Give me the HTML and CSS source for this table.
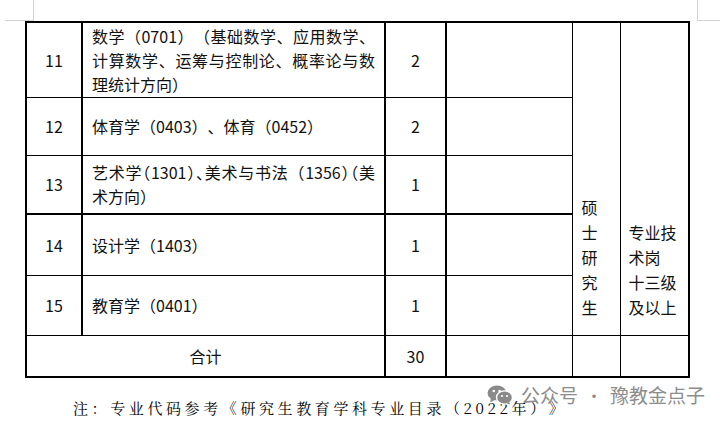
FILE: index.html
```html
<!DOCTYPE html>
<html lang="zh-CN">
<head>
<meta charset="utf-8">
<title>招聘岗位表</title>
<link rel="stylesheet" href="styles.css">
</head>
<body>
<div class="page">
  <span class="mark mark-left"></span>
  <span class="mark mark-right"></span>
  <table class="quota">
    <colgroup>
      <col class="w-no"><col class="w-major"><col class="w-num"><col class="w-blank"><col class="w-edu"><col class="w-post">
    </colgroup>
    <tbody>
      <tr class="r11">
        <td class="no">11</td>
        <td class="major">
          <span class="ln just">数学（0701）（基础数学、应用数学、</span>
          <span class="ln just">计算数学、运筹与控制论、概率论与数</span>
          <span class="ln">理统计方向）</span>
        </td>
        <td class="num">2</td>
        <td class="blank"></td>
        <td class="edu" rowspan="5">硕<br>士<br>研<br>究<br>生</td>
        <td class="post" rowspan="5">专业技<br>术岗<br>十三级<br>及以上</td>
      </tr>
      <tr class="r12">
        <td class="no">12</td>
        <td class="major">体育学（0403）、体育（0452）</td>
        <td class="num">2</td>
        <td class="blank"></td>
      </tr>
      <tr class="r13">
        <td class="no">13</td>
        <td class="major">
          <span class="ln just">艺术学<span class="half">（</span>1301<span class="half">）、</span>美术与书法（1356<span class="half">）（</span>美</span>
          <span class="ln">术方向）</span>
        </td>
        <td class="num">1</td>
        <td class="blank"></td>
      </tr>
      <tr class="r14">
        <td class="no">14</td>
        <td class="major">设计学（1403）</td>
        <td class="num">1</td>
        <td class="blank"></td>
      </tr>
      <tr class="r15">
        <td class="no">15</td>
        <td class="major">教育学（0401）</td>
        <td class="num">1</td>
        <td class="blank"></td>
      </tr>
      <tr class="total">
        <td class="sum-label" colspan="2">合计</td>
        <td class="num">30</td>
        <td class="blank"></td>
        <td class="blank"></td>
        <td class="blank"></td>
      </tr>
    </tbody>
  </table>
  <p class="note">注：专业代码参考《研究生教育学科专业目录（2022年）》</p>
  <div class="watermark">
    <svg class="wx" width="26" height="20" viewBox="0 0 26 20" aria-hidden="true">
      <ellipse cx="10" cy="8" rx="9.5" ry="7.6" fill="#8a8a8a"/>
      <path d="M4 13.5 L3 17.5 L8 14.8 Z" fill="#8a8a8a"/>
      <ellipse cx="17.5" cy="12.5" rx="8" ry="6.6" fill="#8a8a8a" stroke="#fff" stroke-width="1.4"/>
      <path d="M22 17 L23.5 19.6 L19.5 18.2 Z" fill="#8a8a8a"/>
      <circle cx="6.8" cy="6" r="1.3" fill="#fff"/>
      <circle cx="12.6" cy="6" r="1.3" fill="#fff"/>
      <circle cx="15" cy="11" r="1.1" fill="#fff"/>
      <circle cx="20" cy="11" r="1.1" fill="#fff"/>
    </svg>
    <span class="wm-text">公众号</span>
    <span class="wm-dot">·</span>
    <span class="wm-text">豫教金点子</span>
  </div>
</div>
</body>
</html>
```

FILE: styles.css
```css
html, body {
  margin: 0;
  padding: 0;
  background: #fff;
}

body {
  font-family: "Noto Sans CJK SC", "Noto Sans", sans-serif;
  color: #111;
  text-spacing-trim: space-all;
}

.page {
  position: relative;
  width: 720px;
  height: 428px;
  box-sizing: border-box;
  padding: 21px 0 0 25px;
  overflow: hidden;
}

/* crop marks of the document page */
.mark {
  position: absolute;
  top: 0;
  height: 20px;
  border-bottom: 1px solid #d2d2d2;
}
.mark-left {
  left: 5px;
  width: 28px;
  border-right: 1px solid #d2d2d2;
}
.mark-right {
  left: 697px;
  width: 23px;
  border-left: 1px solid #d2d2d2;
}

.quota {
  border-collapse: collapse;
  table-layout: fixed;
  width: 665px;
  border: 2px solid #000;
  font-size: 16px;
  line-height: 24.5px;
  font-weight: 400;
}

.w-no { width: 56px; }
.w-major { width: 303px; }
.w-num { width: 61px; }
.w-blank { width: 126px; }
.w-edu { width: 48px; }
.w-post { width: 69px; }

.quota td {
  border: 1px solid #000;
  padding: 0 8px;
  vertical-align: middle;
}

.quota td.no,
.quota td.major,
.quota td.num,
.quota td.sum-label {
  border-right-width: 2px;
}

.r11 { height: 75px; }
.r12 { height: 58px; }
.r13 { height: 59px; }
.r14 { height: 61px; }
.r15 { height: 60px; }
.total { height: 42px; }

.r13 td {
  border-bottom-width: 2px;
}

.no,
.num,
.sum-label {
  text-align: center;
}

.quota td.major {
  padding: 0 9px 0 9px;
  white-space: nowrap;
  line-height: 24px;
}

.ln {
  display: block;
}

.ln.just {
  text-align: justify;
  text-align-last: justify;
  text-justify: inter-character;
}

.half {
  font-feature-settings: "halt";
}

.quota td.edu,
.quota td.post {
  vertical-align: bottom;
  padding: 0 0 15px 9px;
  line-height: 25px;
  white-space: nowrap;
}
.quota td.post {
  padding-left: 8px;
}

.note {
  margin: 20px 0 0 48px;
  font-size: 15px;
  line-height: 20px;
  letter-spacing: 3.6px;
  color: #000;
  font-family: "Noto Serif CJK SC", "Noto Sans CJK SC", serif;
}

.watermark {
  position: absolute;
  left: 487px;
  top: 384px;
  display: flex;
  align-items: center;
  color: #8c8c8c;
  font-size: 19px;
  line-height: 22px;
}

.wx {
  display: block;
  flex: none;
  margin-right: 8px;
}

.wm-text {
  white-space: nowrap;
}

.wm-dot {
  width: 32px;
  text-align: center;
  font-size: 16px;
}
```
